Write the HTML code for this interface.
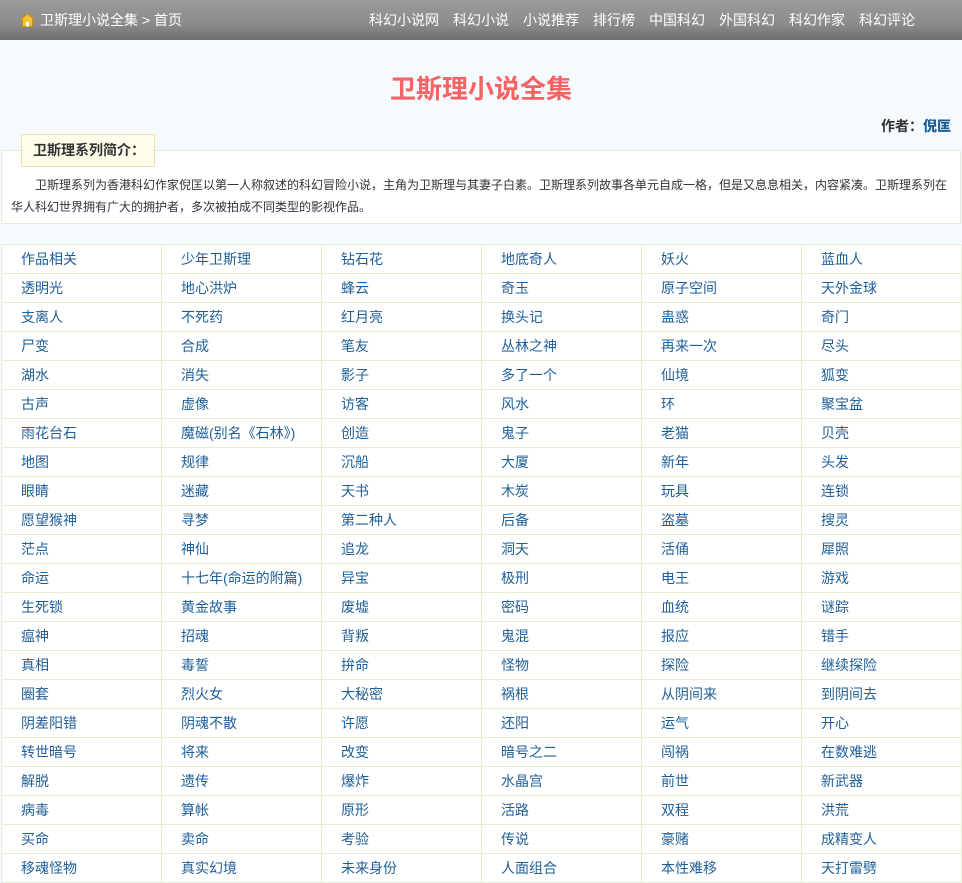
<!DOCTYPE html>
<html><head><meta charset="utf-8">
<style>
*{margin:0;padding:0;box-sizing:border-box}
body{width:962px;height:875px;overflow:hidden;background:#f5faff;font-family:"Liberation Sans","Noto Sans CJK SC",sans-serif;font-size:14px;color:#333}
.hd{height:40px;background:linear-gradient(#9a9a9a,#8c8c8c 60%,#6e6e6e);position:relative;color:#fff}
.crumb{position:absolute;left:20px;top:11px;font-size:14px;line-height:18px}
.crumb svg{vertical-align:-2px;margin-right:5px}
.nav{position:absolute;left:369px;top:11px;line-height:18px;white-space:nowrap}
.nav span{margin-right:14px}
h1{position:absolute;top:71px;left:0;width:962px;text-align:center;font-size:26px;color:#f46464;font-weight:bold;line-height:36px}
.au{position:absolute;top:116px;right:11px;font-weight:bold;font-size:14px;color:#333}
.au b{color:#1f5f99}
.box{position:absolute;left:1px;top:150px;width:960px;height:74px;border:1px solid #e3ecd8;background:#fff}
.lg{position:absolute;left:21px;top:134px;width:134px;height:33px;border:1px solid #f0dfb0;background:#fffdea;font-weight:bold;font-size:14px;line-height:31px;padding-left:11px;color:#333}
.txt{position:absolute;left:11px;top:174px;width:944px;font-size:12px;line-height:22px;text-indent:24px;color:#333}
table{position:absolute;left:1px;top:244px;border-collapse:collapse;background:#fff}
td{width:160px;height:29px;border:1px solid #e6eed6;padding-left:19px;color:#1f5f99;font-size:14px;white-space:nowrap}
</style></head><body>
<div class="hd">
<div class="crumb"><svg width="15" height="14" viewBox="0 0 15 14"><path d="M7.5 0.5 L0.5 7 H2.5 V13.5 H12.5 V7 H14.5 Z" fill="#f2c230" stroke="#c88a10" stroke-width="1"/><rect x="6" y="9" width="3" height="4.5" fill="#fff"/></svg>卫斯理小说全集 &gt; 首页</div>
<div class="nav"><span>科幻小说网</span><span>科幻小说</span><span>小说推荐</span><span>排行榜</span><span>中国科幻</span><span>外国科幻</span><span>科幻作家</span><span>科幻评论</span></div>
</div>
<h1>卫斯理小说全集</h1>
<div class="au">作者：<b>倪匡</b></div>
<div class="box"></div>
<div class="lg">卫斯理系列简介：</div>
<div class="txt">卫斯理系列为香港科幻作家倪匡以第一人称叙述的科幻冒险小说，主角为卫斯理与其妻子白素。卫斯理系列故事各单元自成一格，但是又息息相关，内容紧凑。卫斯理系列在华人科幻世界拥有广大的拥护者，多次被拍成不同类型的影视作品。</div>
<table>
<tr><td>作品相关</td><td>少年卫斯理</td><td>钻石花</td><td>地底奇人</td><td>妖火</td><td>蓝血人</td></tr>
<tr><td>透明光</td><td>地心洪炉</td><td>蜂云</td><td>奇玉</td><td>原子空间</td><td>天外金球</td></tr>
<tr><td>支离人</td><td>不死药</td><td>红月亮</td><td>换头记</td><td>蛊惑</td><td>奇门</td></tr>
<tr><td>尸变</td><td>合成</td><td>笔友</td><td>丛林之神</td><td>再来一次</td><td>尽头</td></tr>
<tr><td>湖水</td><td>消失</td><td>影子</td><td>多了一个</td><td>仙境</td><td>狐变</td></tr>
<tr><td>古声</td><td>虚像</td><td>访客</td><td>风水</td><td>环</td><td>聚宝盆</td></tr>
<tr><td>雨花台石</td><td>魔磁(别名《石林》)</td><td>创造</td><td>鬼子</td><td>老猫</td><td>贝壳</td></tr>
<tr><td>地图</td><td>规律</td><td>沉船</td><td>大厦</td><td>新年</td><td>头发</td></tr>
<tr><td>眼睛</td><td>迷藏</td><td>天书</td><td>木炭</td><td>玩具</td><td>连锁</td></tr>
<tr><td>愿望猴神</td><td>寻梦</td><td>第二种人</td><td>后备</td><td>盗墓</td><td>搜灵</td></tr>
<tr><td>茫点</td><td>神仙</td><td>追龙</td><td>洞天</td><td>活俑</td><td>犀照</td></tr>
<tr><td>命运</td><td>十七年(命运的附篇)</td><td>异宝</td><td>极刑</td><td>电王</td><td>游戏</td></tr>
<tr><td>生死锁</td><td>黄金故事</td><td>废墟</td><td>密码</td><td>血统</td><td>谜踪</td></tr>
<tr><td>瘟神</td><td>招魂</td><td>背叛</td><td>鬼混</td><td>报应</td><td>错手</td></tr>
<tr><td>真相</td><td>毒誓</td><td>拚命</td><td>怪物</td><td>探险</td><td>继续探险</td></tr>
<tr><td>圈套</td><td>烈火女</td><td>大秘密</td><td>祸根</td><td>从阴间来</td><td>到阴间去</td></tr>
<tr><td>阴差阳错</td><td>阴魂不散</td><td>许愿</td><td>还阳</td><td>运气</td><td>开心</td></tr>
<tr><td>转世暗号</td><td>将来</td><td>改变</td><td>暗号之二</td><td>闯祸</td><td>在数难逃</td></tr>
<tr><td>解脱</td><td>遗传</td><td>爆炸</td><td>水晶宫</td><td>前世</td><td>新武器</td></tr>
<tr><td>病毒</td><td>算帐</td><td>原形</td><td>活路</td><td>双程</td><td>洪荒</td></tr>
<tr><td>买命</td><td>卖命</td><td>考验</td><td>传说</td><td>豪赌</td><td>成精变人</td></tr>
<tr><td>移魂怪物</td><td>真实幻境</td><td>未来身份</td><td>人面组合</td><td>本性难移</td><td>天打雷劈</td></tr>
</table>
</body></html>
